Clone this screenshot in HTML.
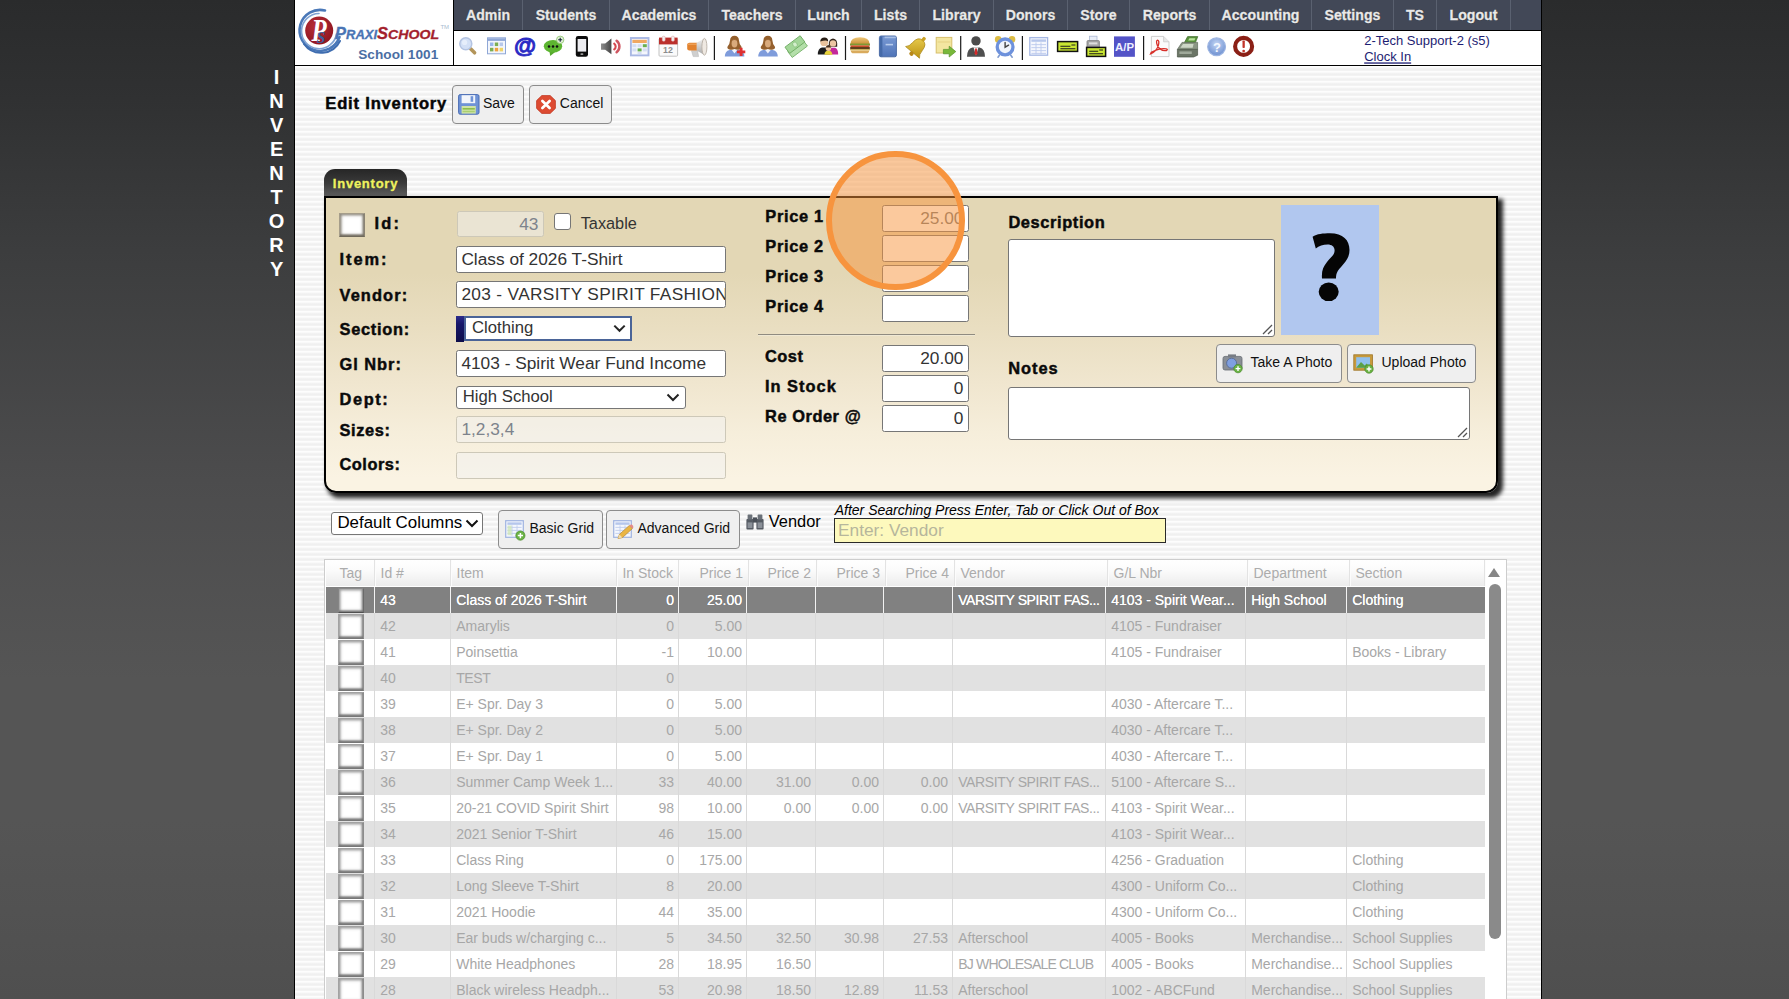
<!DOCTYPE html>
<html>
<head>
<meta charset="utf-8">
<title>Edit Inventory</title>
<style>
*{box-sizing:border-box;}
html,body{margin:0;padding:0;}
body{width:1789px;height:999px;overflow:hidden;position:relative;font-family:"Liberation Sans",sans-serif;
 background:linear-gradient(to bottom,#2a2b2c 0px,#303132 100px,#3c3d3e 250px,#4c4c4d 480px,#555555 680px,#555555 820px,#4f4f4f 999px);}
.abs{position:absolute;}
#wrap{position:absolute;left:294px;top:0;width:1248px;height:999px;border-left:1px solid #000;border-right:1px solid #000;
 background:repeating-linear-gradient(to bottom,#fdfdfd 0px,#fdfdfd 1px,#f5f5f5 2px,#f0f0f0 3px,#f0f0f0 4px,#f6f6f6 5px);background-position:0 66px;}
#hdr{position:absolute;left:0;top:0;width:1246px;height:66px;background:#fff;border-bottom:1px solid #000;}
#logo{position:absolute;left:0;top:0;width:159px;height:65px;border-right:1px solid #000;background:#fff;}
#nav{position:absolute;left:159px;top:0;width:1087px;height:31px;background:#424857;border-bottom:1px solid #000;display:flex;}
#nav div{height:30px;border-right:1px solid #5a6170;color:#e9e9e9;font-weight:bold;font-size:14.1px;line-height:30px;text-align:center;text-shadow:0 0 1px #000;letter-spacing:0.05px;-webkit-text-stroke:0.35px #e9e9e9;}
#vert{position:absolute;left:264.6px;top:65px;width:24px;color:#fff;font-weight:bold;font-size:20px;line-height:24px;text-align:center;}
.btn{position:absolute;height:39px;border:1px solid #8c8c8c;border-radius:4px;background:#efefef;font-size:14px;color:#111;line-height:35px;white-space:nowrap;}
.btn span{position:absolute;top:0;}
.lbl{position:absolute;font-weight:bold;font-size:16.4px;color:#0a0a0a;letter-spacing:0.72px;white-space:nowrap;line-height:20px;margin-top:0.5px;-webkit-text-stroke:0.45px #0a0a0a;}
.inp{position:absolute;height:27.2px;border:1px solid #767676;border-radius:2.5px;background:#fff;font-size:17.3px;color:#333;line-height:25.4px;padding:0 4.6px 0 4.4px;white-space:nowrap;overflow:hidden;}
.inp.dis{background:rgba(241,241,241,0.5);border-color:#cdc8b8;color:#7d838c;}
.inp.r{text-align:right;}
#panel{position:absolute;left:29px;top:196px;width:1174px;height:296.8px;border:2px solid #000;border-radius:0 0 12px 12px;
 background:linear-gradient(to bottom,#e3d7b5 0px,#e3d7b5 75px,#e9dec1 130px,#f0e6cf 185px,#f6eedb 235px,#faf3e3 280px,#faf3e3 100%);box-shadow:4px 4px 4.5px 0.3px rgba(0,0,0,0.86);}
#tab{position:absolute;left:29px;top:169px;width:83px;height:28px;border-radius:11px 11px 0 0;background:linear-gradient(to bottom,#262626,#3a3a3a 50%,#5e5e5e);
 color:#eef25e;font-weight:bold;font-size:13px;letter-spacing:0.75px;line-height:29px;text-align:center;-webkit-text-stroke:0.3px #eef25e;}

#grid{position:absolute;left:29px;top:559px;width:1183px;height:460px;background:#fff;border:1px solid #cdcdcd;font-size:14px;}
.gh{position:absolute;left:1px;top:0;height:26px;width:1160px;display:flex;background:linear-gradient(to bottom,#ffffff 0%,#fbfbfb 40%,#ececec 100%);color:#acacac;line-height:27px;}
.gh div{height:26px;border-right:1px solid #e3e3e3;box-shadow:1px 0 0 #fcfcfc;padding:0 0 0 5.5px;white-space:nowrap;overflow:hidden;}
.gh div.r{text-align:right;padding:0 5px 0 0;}
.gh div.t{padding-left:13.5px;}
.gr{position:absolute;left:1px;height:26px;width:1159px;display:flex;color:#a7a7a7;line-height:26px;}
.gr div{height:26px;border-right:1px solid #d9d9d9;padding:0 0 0 5.2px;white-space:nowrap;overflow:hidden;position:relative;}
.gr div:last-child{border-right:0;}
.gr div.r{text-align:right;padding:0 4px 0 0;}
.gr div.u{letter-spacing:-0.38px;}
.gr.ev{background:#e1e1e1;}
.gr.od{background:#fff;}
.gr.sel{background:#818181;color:#fff;}
.gr.sel div{border-right-color:#f2f2f2;text-shadow:0 0 0.3px #fff;}
.gr i{position:absolute;left:12px;top:1px;width:26px;height:25px;background:#fff;border:1px solid #a2a2a2;border-bottom-color:#777;border-right-color:#8c8c8c;box-shadow:inset 0 0 2.5px 1.6px rgba(70,70,70,0.52),inset -0.5px -1.5px 1.5px rgba(40,40,40,0.42);}
.gr.sel i{border-color:#8a8a8a #6a6a6a #505050 #858585;}
.sbu{position:absolute;left:1163px;top:8px;width:0;height:0;border-left:6.5px solid transparent;border-right:6.5px solid transparent;border-bottom:9px solid #868686;}
.sbt{position:absolute;left:1163.5px;top:24px;width:12px;height:355px;border-radius:6px;background:#8a8a8a;}
</style>
</head>
<body>
<div id="vert">I<br>N<br>V<br>E<br>N<br>T<br>O<br>R<br>Y</div>
<div id="wrap">
 <div id="hdr">
  <div id="logo"><svg class="abs" style="left:0;top:0" width="158" height="65" viewBox="0 0 158 65">
 <defs><radialGradient id="lgR" cx="40%" cy="35%" r="70%"><stop offset="0" stop-color="#b8303a"/><stop offset="1" stop-color="#8e141e"/></radialGradient></defs>
 <path d="M30 10.5 A20.5 20.5 0 1 0 44.5 37" fill="none" stroke="#4a78b8" stroke-width="2.6" stroke-linecap="round"/>
 <path d="M24 13.5 A17.6 17.6 0 1 0 41.5 34" fill="none" stroke="#7fa3d4" stroke-width="1.6" stroke-linecap="round"/>
 <path d="M9 44 A21 21 0 0 0 45 41" fill="none" stroke="#3f6db0" stroke-width="2" stroke-linecap="round"/>
 <circle cx="24.2" cy="30.6" r="14" fill="url(#lgR)"/>
 <text transform="translate(16.5 40.6) scale(0.8 1)" font-family="Liberation Serif" font-style="italic" font-weight="bold" font-size="31" fill="#fff">P</text>
 <text x="21.5" y="43" font-family="Liberation Serif" font-style="italic" font-weight="bold" font-size="16" fill="#3d5e9e">S</text>
 <text y="38.6" font-family="Liberation Sans" font-style="italic" font-weight="bold" fill="#4a74b4" stroke="#4a74b4" stroke-width="0.3"><tspan x="40" font-size="16.5">P</tspan><tspan font-size="12" textLength="31" lengthAdjust="spacingAndGlyphs">RAXI</tspan><tspan fill="#a31f2d" stroke="#a31f2d" font-size="16.5">S</tspan><tspan fill="#a31f2d" stroke="#a31f2d" font-size="12" textLength="51" lengthAdjust="spacingAndGlyphs">CHOOL</tspan></text>
 <text x="145.4" y="29" font-family="Liberation Sans" font-size="6" fill="#a9bcd0">TM</text>
 <text x="63.2" y="59.2" font-family="Liberation Sans" font-weight="bold" font-size="13.6" fill="#4a6ea3" textLength="80" lengthAdjust="spacing">School 1001</text>
</svg>
</div>
  <div id="nav"><div style="width:69px">Admin</div><div style="width:87px">Students</div><div style="width:99px">Academics</div><div style="width:87px">Teachers</div><div style="width:66px">Lunch</div><div style="width:58px">Lists</div><div style="width:74px">Library</div><div style="width:74px">Donors</div><div style="width:62px">Store</div><div style="width:80px">Reports</div><div style="width:102px">Accounting</div><div style="width:82px">Settings</div><div style="width:43px">TS</div><div style="width:74px">Logout</div></div>
  <svg class="abs" style="left:159px;top:31px" width="1087" height="34" viewBox="454 31 1087 34" font-family="Liberation Sans">
 <defs>
  <linearGradient id="gGray" x1="0" y1="0" x2="1" y2="0"><stop offset="0" stop-color="#8e8e8e"/><stop offset="1" stop-color="#454545"/></linearGradient>
  <linearGradient id="gBlue" x1="0" y1="0" x2="0" y2="1"><stop offset="0" stop-color="#7a9ad4"/><stop offset="1" stop-color="#4f74b8"/></linearGradient>
  <radialGradient id="gHelp" cx="50%" cy="35%" r="65%"><stop offset="0" stop-color="#c4d6f4"/><stop offset="1" stop-color="#6d8fd0"/></radialGradient>
  <linearGradient id="gBell" x1="0" y1="0" x2="1" y2="1"><stop offset="0" stop-color="#efd457"/><stop offset="1" stop-color="#bb9212"/></linearGradient>
  <linearGradient id="gMeg" x1="0" y1="0" x2="0" y2="1"><stop offset="0" stop-color="#f1f1f1"/><stop offset="1" stop-color="#a9a9a9"/></linearGradient>
  <linearGradient id="gBun" x1="0" y1="0" x2="0" y2="1"><stop offset="0" stop-color="#f0c878"/><stop offset="1" stop-color="#c8923a"/></linearGradient>
 </defs>
 <!-- separators -->
 <g stroke="#1a1a1a" stroke-width="1.2"><path d="M714.4 36V60M845.5 36V60M960.7 36V60M1022.4 36V60M1143.6 36V60"/></g>
 <!-- 1 magnifier -->
 <path d="M470.6 48.8L474.6 52.8" stroke="#b3955a" stroke-width="3.6" stroke-linecap="round"/>
 <circle cx="465.8" cy="43.7" r="6" fill="#d3e0f6" stroke="#b4c4e2" stroke-width="1.5"/><circle cx="464.6" cy="42.4" r="2.6" fill="#e6eefb"/>
 <!-- 2 grid app -->
 <rect x="487.5" y="37.8" width="18" height="16" fill="#f3f6fc" stroke="#8fa7d6"/>
 <rect x="488" y="38.3" width="17" height="2.6" fill="#8fa7d6"/>
 <rect x="490" y="42.5" width="3.4" height="3.6" fill="#9ab6ea"/><rect x="494.8" y="42.5" width="3.4" height="3.6" fill="#7cae52"/><rect x="499.6" y="42.5" width="3.4" height="3.6" fill="#b8c8ea"/>
 <rect x="490" y="47.8" width="3.4" height="3.6" fill="#7cae52"/><rect x="494.8" y="47.8" width="3.4" height="3.6" fill="#eea23c"/><rect x="499.6" y="47.8" width="3.4" height="3.6" fill="#efd468"/>
 <!-- 3 at -->
 <text x="514" y="53.2" font-size="22.6" font-weight="bold" fill="#2a2ac4" stroke="#2a2ac4" stroke-width="0.9">@</text>
 <!-- 4 chat -->
 <path d="M549.5 51.6L550.2 56L555.5 51.8Z" fill="#55a82c"/>
 <ellipse cx="553" cy="46.2" rx="9.2" ry="6.3" fill="#5db531"/>
 <circle cx="549" cy="46.6" r="1.25" fill="#111"/><circle cx="553" cy="46.6" r="1.25" fill="#111"/><circle cx="557" cy="46.6" r="1.25" fill="#111"/>
 <circle cx="560.2" cy="39.8" r="3.7" fill="#e4f2da" stroke="#93c877" stroke-width="0.9"/>
 <path d="M558.2 39.8H562.2M560.2 37.8V41.8" stroke="#123" stroke-width="1.1"/>
 <!-- 5 phone -->
 <rect x="575.8" y="36" width="12.2" height="20.8" rx="2.2" fill="#0c0c0c"/>
 <rect x="577.6" y="39" width="8.6" height="12.6" fill="#ececf0"/>
 <rect x="580.4" y="53.2" width="3" height="1.8" rx="0.8" fill="#9a9a9a"/>
 <!-- 6 speaker -->
 <path d="M601 43.6H605.2L611.4 38.6V54.2L605.2 49.8H601Z" fill="url(#gGray)"/>
 <path d="M614.2 43.6A3.6 3.6 0 0 1 614.2 49.4" fill="none" stroke="#d6484e" stroke-width="2.1" stroke-linecap="round"/>
 <path d="M616.6 40.8A7.2 7.2 0 0 1 616.6 52.2" fill="none" stroke="#cf5560" stroke-width="2.5" stroke-linecap="round"/>
 <!-- 7 calendar grid -->
 <rect x="630.9" y="38" width="17.6" height="17.4" fill="#f4f6fc" stroke="#a9b8e4" stroke-width="1.9"/>
 <rect x="632.4" y="39.8" width="14.4" height="3.2" fill="#f0a862"/>
 <g fill="#d5def2"><rect x="632.4" y="44.2" width="4" height="3"/><rect x="637.6" y="44.2" width="4" height="3"/><rect x="632.4" y="48.4" width="4" height="3"/><rect x="642.8" y="48.4" width="4" height="3"/><rect x="637.6" y="52" width="4" height="2"/></g>
 <g fill="#6ab050"><rect x="642.8" y="44.2" width="4" height="3"/><rect x="637.6" y="48.4" width="4" height="3"/></g>
 <!-- 8 calendar date -->
 <rect x="659" y="38.6" width="18.6" height="17.6" rx="1" fill="#fafafa" stroke="#c2c2c2"/>
 <rect x="659" y="37.6" width="18.6" height="6.8" fill="#bb302c"/>
 <rect x="662.2" y="36.2" width="3" height="5" rx="1.2" fill="#f1f1f1" stroke="#d99" stroke-width="0.5"/><rect x="671.4" y="36.2" width="3" height="5" rx="1.2" fill="#f1f1f1" stroke="#d99" stroke-width="0.5"/>
 <text x="663" y="53.4" font-size="8.8" font-weight="bold" fill="#8d8d8d">12</text>
 <!-- 9 megaphone -->
 <path d="M691.4 50.6L693.2 56.6H698.6L697.6 50.6Z" fill="#cfcfcf" stroke="#b5b5b5" stroke-width="0.5"/>
 <path d="M687.2 44.6Q687.2 42.8 689.4 42.8H697V50.6H689.4Q687.2 50.6 687.2 48.8Z" fill="#e2822e"/>
 <path d="M688 44.2H696.6" stroke="#f0a860" stroke-width="1.2"/>
 <path d="M696.6 42.8L704.6 38.6V55L696.6 50.6Z" fill="url(#gMeg)"/>
 <ellipse cx="704.4" cy="46.8" rx="2.5" ry="8.4" fill="#efe9e2" stroke="#b9b0a6" stroke-width="0.9"/>
 <!-- 10 user add -->
 <g id="uW">
  <path d="M724.8 56.6Q724.8 51.2 729.6 50H739.4Q744.4 51.2 744.4 56.6Z" fill="#7f9cdb"/>
  <path d="M731.4 49.6L734.5 53.6L737.6 49.6Z" fill="#f2f4fb"/>
  <path d="M734.5 35.8Q730.4 35.8 730 40.4Q729.8 44 727.6 46.4Q726.6 48.6 729.4 49.4Q732 50 734.5 49Q737 50 739.6 49.4Q742.4 48.6 741.4 46.4Q739.2 44 739 40.4Q738.6 35.8 734.5 35.8Z" fill="#95602d"/>
  <ellipse cx="734.5" cy="43.4" rx="2.9" ry="4" fill="#d9aa7c"/>
  <path d="M731.4 41Q734.5 37.8 737.6 41Q736 39.8 734.5 39.9Q733 39.8 731.4 41Z" fill="#7a4a20"/>
 </g>
 <path d="M736.9 51.9H745.3M741.1 47.7V56.1" stroke="#df3030" stroke-width="2.9"/>
 <!-- 11 user -->
 <g transform="translate(33.4 0)">
  <path d="M724.8 56.6Q724.8 51.2 729.6 50H739.4Q744.4 51.2 744.4 56.6Z" fill="#7f9cdb"/>
  <path d="M731.4 49.6L734.5 53.6L737.6 49.6Z" fill="#f2f4fb"/>
  <path d="M734.5 35.8Q730.4 35.8 730 40.4Q729.8 44 727.6 46.4Q726.6 48.6 729.4 49.4Q732 50 734.5 49Q737 50 739.6 49.4Q742.4 48.6 741.4 46.4Q739.2 44 739 40.4Q738.6 35.8 734.5 35.8Z" fill="#95602d"/>
  <ellipse cx="734.5" cy="43.4" rx="2.9" ry="4" fill="#d9aa7c"/>
  <path d="M731.4 41Q734.5 37.8 737.6 41Q736 39.8 734.5 39.9Q733 39.8 731.4 41Z" fill="#7a4a20"/>
 </g>
 <!-- 12 money -->
 <g transform="rotate(-37 796 46.5)"><rect x="786.4" y="45.6" width="19" height="7.4" fill="#b4dfaa" stroke="#7fb873" stroke-width="0.9"/><rect x="786.8" y="40.4" width="19" height="7.8" fill="#a3d698" stroke="#72ae66" stroke-width="0.9"/><ellipse cx="796.4" cy="44.3" rx="2.2" ry="2.6" fill="#d3efcc" stroke="#7fb873" stroke-width="0.6"/></g>
 <!-- 13 family -->
 <path d="M817.8 54.6Q817.8 48.4 822 47.6H826.4Q830 48.6 830 54.6Z" fill="#1c1c1c"/>
 <circle cx="824.2" cy="42.2" r="3.9" fill="#e9c29c"/><path d="M820.2 41.6Q820.6 37.4 824.4 37.4Q828.2 37.6 828.2 41.4Q826 39.6 820.2 41.6Z" fill="#2a2018"/>
 <path d="M827.4 54.6Q827.6 48.6 831 47.8H835Q838.2 48.8 838.2 54.6Z" fill="#c4289a"/>
 <path d="M828.8 46.8Q828 39 833 38.6Q838 39 837.2 46.8Z" fill="#33261c"/><circle cx="833" cy="43.4" r="3.2" fill="#ecc6a2"/>
 <path d="M824.4 54.7Q824.6 50.8 828.4 50.6Q832.2 50.8 832.4 54.7Z" fill="#e6d23a"/>
 <circle cx="828.4" cy="48.2" r="2.7" fill="#efc9a4"/><path d="M825.7 47.6Q826.2 45 828.4 45Q830.8 45 831.1 47.6Z" fill="#4a3220"/>
 <!-- 14 burger -->
 <path d="M850.4 44Q850.4 37.2 860 37.2Q869.6 37.2 869.6 44Z" fill="url(#gBun)"/>
 <rect x="850" y="43.6" width="20" height="2" fill="#7d9a34"/><rect x="850.6" y="45.4" width="18.8" height="1.6" fill="#d4502e"/><rect x="850.2" y="46.9" width="19.6" height="2.7" fill="#5f3f1c"/><rect x="850.4" y="49.4" width="19.2" height="1" fill="#e7c84e"/>
 <path d="M850.8 50.4H869.2Q869.2 53.2 866.4 53.2H853.6Q850.8 53.2 850.8 50.4Z" fill="#d9aa5c"/>
 <!-- 15 book -->
 <rect x="879.4" y="36" width="17" height="20.8" rx="1.6" fill="url(#gBlue)" stroke="#42639e" stroke-width="0.9"/>
 <rect x="880" y="36.4" width="2.4" height="20" fill="#456aa8"/>
 <rect x="884.6" y="36.6" width="11.2" height="1.6" fill="#a9c0e6"/><rect x="885.6" y="43.8" width="7.4" height="1.6" fill="#b9cdee"/>
 <!-- 16 bell -->
 <g transform="rotate(40 917.4 46.6) translate(917.4 46.6) scale(1.16) translate(-917 -46.5)"><path d="M909.2 53Q911.6 51.2 911.6 46.4Q911.8 39.4 917 39.4Q922.2 39.4 922.4 46.4Q922.4 51.2 924.8 53Z" fill="url(#gBell)" stroke="#a88410" stroke-width="0.6"/><rect x="915.6" y="36.2" width="2.8" height="4" rx="1" fill="#c9a024"/><circle cx="917" cy="54.4" r="1.9" fill="#b8881a"/></g>
 <!-- 17 note arrow -->
 <rect x="936.2" y="37.4" width="15.6" height="15.6" fill="#f3e6a0" stroke="#d7bf6c"/>
 <path d="M937.6 42H950.4" stroke="#e5d182" stroke-width="1"/>
 <path d="M943.4 49.4H949.2V46.2L955.8 51.6L949.2 57V53.8H943.4Z" fill="#78b83a" stroke="#56922a" stroke-width="0.7"/>
 <!-- 18 businessman -->
 <circle cx="976" cy="40.9" r="4.7" fill="#4c4c4c"/>
 <path d="M967 56.8Q967 48.8 972.4 47.4H979.6Q985 48.8 985 56.8Z" fill="#4f4f4f"/>
 <path d="M973.6 47.6L976 55.4L978.4 47.6Z" fill="#f3f3f3"/><path d="M975.2 48.4H976.8L977.5 53.6L976 55.4L974.5 53.6Z" fill="#d42a2a"/>
 <!-- 19 alarm clock -->
 <circle cx="998.2" cy="39.4" r="3.3" fill="#dcbc44"/><circle cx="1012" cy="39.4" r="3.3" fill="#dcbc44"/>
 <path d="M999.6 55L998 57.2M1010.6 55L1012.2 57.2" stroke="#7f9bd0" stroke-width="1.6" stroke-linecap="round"/>
 <circle cx="1005.1" cy="46.9" r="7.9" fill="#f1f5fc" stroke="#6d91dc" stroke-width="3.3"/>
 <path d="M1005.1 42.4V47.2L1008.6 45.2" fill="none" stroke="#444" stroke-width="1.4" stroke-linecap="round"/>
 <!-- 20 table -->
 <rect x="1029.8" y="37.6" width="17.8" height="17.6" fill="#f5f7fd" stroke="#a6b8e4" stroke-width="1.3"/>
 <rect x="1031.4" y="39.4" width="14.6" height="2.4" fill="#b7c7ec"/>
 <path d="M1031.4 44.6H1046M1031.4 47.6H1046M1031.4 50.6H1046M1031.4 53.4H1046M1036 42.4V54.4M1041 42.4V54.4" stroke="#bccaec" stroke-width="0.9"/>
 <!-- 21 check card -->
 <rect x="1057.6" y="41.6" width="20" height="9.8" fill="#c9e632" stroke="#111" stroke-width="1.5"/>
 <path d="M1060.4 46.2H1070.4M1071.4 45H1075.4M1060.4 48.8H1075.4" stroke="#1c1c1c" stroke-width="1.1"/>
 <!-- 22 printer+check -->
 <rect x="1089.6" y="36.2" width="7.4" height="5" fill="#e9eef8" stroke="#aab7d2" stroke-width="0.8"/>
 <rect x="1087" y="40.6" width="12.4" height="7.6" rx="1" fill="#a6a6a6" stroke="#7d7d7d" stroke-width="0.8"/>
 <rect x="1089" y="42.4" width="8.4" height="2" fill="#dedede"/>
 <rect x="1086.6" y="47.4" width="19" height="9" fill="#c9e632" stroke="#111" stroke-width="1.5"/>
 <path d="M1089.2 51.2H1098.2M1099.2 50H1103M1089.2 53.8H1103" stroke="#1c1c1c" stroke-width="1.1"/>
 <!-- 23 A/P -->
 <rect x="1114" y="36.4" width="20.9" height="20.4" fill="#5353c7"/>
 <text x="1115" y="50.6" font-size="10.6" font-weight="bold" fill="#eef0ff" textLength="19" lengthAdjust="spacingAndGlyphs">A/P</text>
 <!-- 24 pdf -->
 <path d="M1151.4 36.4H1163.6L1169 41.8V56.6H1151.4Z" fill="#fbfbfb" stroke="#c9c9c9" stroke-width="0.9"/>
 <path d="M1163.6 36.4V41.8H1169" fill="#e8e8e8" stroke="#c9c9c9" stroke-width="0.8"/>
 <path d="M1150.6 53.8Q1156.4 51.6 1158.4 45.4Q1159.6 40.6 1157.6 40.2Q1155.6 40.8 1157.4 45.6Q1160 51.4 1166.4 50.6Q1168.4 49.6 1166.2 48.8Q1159.4 47.8 1151.2 52.4Z" fill="none" stroke="#d8302a" stroke-width="1.3"/>
 <!-- 25 cash register -->
 <path d="M1184.4 42.6L1187.6 36.6H1197.8L1195.4 42.6Z" fill="#58903c" stroke="#3f6d2b" stroke-width="0.7"/>
 <path d="M1188.2 40.4L1189.4 38.2H1195.4L1194.4 40.4Z" fill="#b9e49c"/>
 <path d="M1177.4 49.4L1182 42.4H1197.6L1197.6 49.4Z" fill="#8b9684" stroke="#5f6a5a" stroke-width="0.7"/>
 <path d="M1180.4 47.8L1183 44H1193.6L1192.6 47.8Z" fill="#cdd6c6"/>
 <path d="M1177.4 49.4H1197.6V55.2L1193.6 57H1177.4Z" fill="#6b7566" stroke="#4c5648" stroke-width="0.7"/>
 <rect x="1179.4" y="51.4" width="12.4" height="2.6" fill="#9fa99a"/>
 <!-- 26 help -->
 <circle cx="1216.6" cy="46.8" r="8.9" fill="url(#gHelp)" stroke="#9db5e2" stroke-width="1.2"/>
 <text x="1212.9" y="51.6" font-size="13" font-weight="bold" fill="#f5f8ff">?</text>
 <!-- 27 alert -->
 <circle cx="1243.6" cy="46.4" r="8.5" fill="#fff" stroke="#8b2016" stroke-width="4.1"/>
 <rect x="1242.5" y="40.4" width="2.3" height="7.6" rx="0.8" fill="#c2342a"/><circle cx="1243.65" cy="51" r="1.35" fill="#c2342a"/>
 <!-- user text -->
 <text x="1364.2" y="45.4" font-size="13" fill="#1d1d72">2-Tech Support-2 (s5)</text>
 <text x="1364.2" y="61.4" font-size="13" fill="#1d1d72" text-decoration="underline">Clock In</text>
</svg>

 </div>
 <div class="abs" style="left:30.3px;top:93.8px;font-weight:bold;font-size:16.6px;letter-spacing:0.8px;color:#050505;line-height:20px;white-space:nowrap;-webkit-text-stroke:0.45px #050505">Edit Inventory</div>
 <div class="btn" style="left:157px;top:85px;width:72px">
  <svg class="abs" style="left:5px;top:8px" width="22" height="21" viewBox="0 0 22 21"><rect x="0.6" y="0.6" width="20.4" height="19.6" rx="1.6" fill="#6f93d6" stroke="#4a6db4" stroke-width="1"/><rect x="3.6" y="1.2" width="13.6" height="8" fill="#f2f5fb"/><rect x="12.6" y="2.2" width="2.6" height="5.6" fill="#6f93d6"/><rect x="3.6" y="12" width="14.2" height="7.6" fill="#cfe3a4"/><rect x="4.6" y="14" width="12.2" height="1.6" fill="#8cbf4a"/><rect x="4.6" y="16.8" width="12.2" height="1.4" fill="#a9d070"/></svg>
  <span style="left:30px;top:9px;line-height:16px">Save</span></div>
 <div class="btn" style="left:234px;top:85px;width:83px">
  <svg class="abs" style="left:6px;top:9px" width="20" height="19" viewBox="0 0 20 19"><path d="M5.8 0.6H14.2L19.4 5.6V13.4L14.2 18.4H5.8L0.6 13.4V5.6Z" fill="#dd4b32" stroke="#c23a24" stroke-width="0.8"/><path d="M6.4 6L13.6 13M13.6 6L6.4 13" stroke="#fff" stroke-width="2.7" stroke-linecap="round"/></svg>
  <span style="left:29.8px;top:9px;line-height:16px">Cancel</span></div>

 <div id="tab">Inventory</div>
 <div id="panel">
 <div class="abs" style="left:13.2px;top:14.8px;width:25.8px;height:24px;background:#fff;border:1px solid #a59d8a;border-right-color:#8a8373;border-bottom-color:#6f695b;box-shadow:inset 0 0 2.5px 1.6px rgba(80,72,55,0.62),inset -0.5px -1.5px 1.5px rgba(60,52,40,0.45)"></div>
  <div class="lbl" style="left:48.5px;top:14.4px;letter-spacing:2.2px">Id:</div>
  <div class="inp dis r" style="left:130.6px;top:12.8px;width:87.4px;height:26.5px;line-height:25.4px">43</div>
  <div class="abs" style="left:227.8px;top:14.8px;width:16.8px;height:16.8px;background:#fff;border:1px solid #767676;border-radius:3px"></div>
  <div class="abs" style="left:254.7px;top:15.4px;font-size:16.3px;color:#333;line-height:20px">Taxable</div>
  <div class="lbl" style="left:13.6px;top:50.6px;letter-spacing:1.9px">Item:</div>
  <div class="inp" style="left:130px;top:48px;width:270px">Class of 2026 T-Shirt</div>
  <div class="lbl" style="left:13.5px;top:86.6px;letter-spacing:1.1px">Vendor:</div>
  <div class="inp" style="left:130px;top:83px;width:270px;letter-spacing:0.33px">203 - VARSITY SPIRIT FASHIONS</div>
  <div class="lbl" style="left:13.5px;top:120.9px">Section:</div>
  <div class="abs" style="left:130px;top:118px;width:8.4px;height:25.6px;background:linear-gradient(to bottom,#2c2c8c 0%,#17176a 30%,#0e0e4a 100%)"></div>
  <div class="abs" style="left:138px;top:118px;width:168px;height:25px;background:#fff;border:2px solid #4a6498;font-size:16.7px;color:#333;line-height:20.5px;padding-left:6px;white-space:nowrap">Clothing
   <svg class="abs" style="right:4.4px;top:6.2px" width="13" height="9" viewBox="0 0 13 9"><path d="M1.3 1.6L6.5 6.8L11.7 1.6" fill="none" stroke="#262626" stroke-width="2"/></svg></div>
  <div class="lbl" style="left:13.5px;top:155.6px;letter-spacing:0.97px">Gl Nbr:</div>
  <div class="inp" style="left:130px;top:152px;width:270px">4103 - Spirit Wear Fund Income</div>
  <div class="lbl" style="left:13.5px;top:190.0px;letter-spacing:1.6px">Dept:</div>
  <div class="abs" style="left:130px;top:188px;width:230px;height:22.5px;background:#fff;border:1px solid #767676;border-radius:3px;font-size:16.7px;color:#333;line-height:20.5px;padding-left:5.8px">High School
   <svg class="abs" style="right:5px;top:6px" width="14" height="9" viewBox="0 0 14 9"><path d="M1.5 1.5L7 7L12.5 1.5" fill="none" stroke="#222" stroke-width="2"/></svg></div>
  <div class="lbl" style="left:13.5px;top:221.0px;letter-spacing:0.6px">Sizes:</div>
  <div class="inp dis" style="left:130px;top:218px;width:270px">1,2,3,4</div>
  <div class="lbl" style="left:13.5px;top:255.9px;letter-spacing:0.5px">Colors:</div>
  <div class="inp dis" style="left:130px;top:254px;width:270px"></div>

  <div class="lbl" style="left:439.3px;top:7.3px;letter-spacing:0.67px">Price 1</div>
  <div class="lbl" style="left:439.3px;top:37.3px;letter-spacing:0.67px">Price 2</div>
  <div class="lbl" style="left:439.3px;top:67.3px;letter-spacing:0.67px">Price 3</div>
  <div class="lbl" style="left:439.3px;top:97.3px;letter-spacing:0.67px">Price 4</div>
  <div class="inp r" style="left:556px;top:7px;width:87px;color:#777">25.00</div>
  <div class="inp r" style="left:556px;top:37px;width:87px"></div>
  <div class="inp r" style="left:556px;top:67px;width:87px"></div>
  <div class="inp r" style="left:556px;top:97px;width:87px"></div>
  <div class="abs" style="left:432px;top:136px;width:217px;height:2px;border-top:1px solid #8f8b80;border-bottom:1px solid #efe8d4"></div>
  <div class="lbl" style="left:439px;top:147.9px;letter-spacing:0.5px">Cost</div>
  <div class="lbl" style="left:439px;top:177.8px;letter-spacing:1px">In Stock</div>
  <div class="lbl" style="left:439px;top:207.5px;letter-spacing:0.55px">Re Order @</div>
  <div class="inp r" style="left:556px;top:147px;width:87px">20.00</div>
  <div class="inp r" style="left:556px;top:177px;width:87px">0</div>
  <div class="inp r" style="left:556px;top:207px;width:87px">0</div>

  <div class="lbl" style="left:682.4px;top:13.5px;letter-spacing:0.62px">Description</div>
  <div class="abs" style="left:682px;top:41px;width:267px;height:98px;background:#fff;border:1px solid #767676;border-radius:3px">
   <svg class="abs" style="right:1px;bottom:1px" width="12" height="12" viewBox="0 0 12 12"><path d="M2 11L11 2M7 11L11 7" stroke="#555" stroke-width="1.3"/></svg></div>
  <div class="abs" style="left:955px;top:7px;width:98px;height:130px;background:#b1c7ef;overflow:hidden">
   <svg width="98" height="130" viewBox="0 0 98 130"><path d="M31.6 31.7 C36 28.8 42 28.2 49 28.2 C62 28.2 68.5 35 68.5 45 C68.5 55 61 60 56.8 66 C55.2 68.5 55 71 55 73.6 L41 73.6 C40.4 66 42 62 46 57 C50 52 53.6 50 53.6 45.6 C53.6 41.6 50.6 39.6 46.6 39.6 C42 39.6 38 41.2 34.8 43.4 Z" fill="#050505"/><ellipse cx="47.7" cy="86.8" rx="10" ry="9.3" fill="#050505"/></svg></div>
  <div class="lbl" style="left:682.2px;top:159.4px;letter-spacing:1px">Notes</div>
  <div class="btn" style="left:890px;top:146px;width:126px">
   <svg class="abs" style="left:5px;top:8px" width="22" height="21" viewBox="0 0 22 21"><rect x="1" y="3.4" width="19" height="13.6" rx="2" fill="#8a8f96" stroke="#666b72" stroke-width="0.8"/><rect x="6" y="1.4" width="8" height="3" fill="#777c84"/><circle cx="9.6" cy="10.2" r="5" fill="#7f9fe0" stroke="#5a6f9a" stroke-width="1"/><circle cx="16" cy="15.6" r="4.2" fill="#6ab344" stroke="#4a8a2c" stroke-width="0.7"/><path d="M13.6 15.6H18.4M16 13.2V18" stroke="#fff" stroke-width="1.4"/></svg>
   <span style="left:33.5px;top:9px;line-height:16px">Take A Photo</span></div>
  <div class="btn" style="left:1021px;top:146px;width:129px">
   <svg class="abs" style="left:5px;top:9px" width="22" height="20" viewBox="0 0 22 20"><rect x="0.8" y="0.8" width="18.6" height="15.4" fill="#c79a3c" stroke="#9e7424" stroke-width="0.8"/><rect x="3.2" y="3.2" width="13.8" height="10.6" fill="#8fc0ee"/><path d="M3.2 13.8L8 8L11.6 11.6L13.8 9.6L17 13.8Z" fill="#5aa048"/><circle cx="16" cy="15" r="4.2" fill="#6ab344" stroke="#4a8a2c" stroke-width="0.7"/><path d="M13.6 15H18.4M16 12.6V17.4" stroke="#fff" stroke-width="1.4"/></svg>
   <span style="left:33.5px;top:9px;line-height:16px">Upload Photo</span></div>
  <div class="abs" style="left:682px;top:189px;width:462px;height:53px;background:#fff;border:1px solid #767676;border-radius:3px">
   <svg class="abs" style="right:1px;bottom:1px" width="12" height="12" viewBox="0 0 12 12"><path d="M2 11L11 2M7 11L11 7" stroke="#555" stroke-width="1.3"/></svg></div>

 </div>
 <div class="abs" style="left:531.2px;top:151px;width:138.6px;height:138.6px;border-radius:50%;border:6px solid #f7943e;background:rgba(247,147,60,0.5)"></div>

 <div class="abs" style="left:36px;top:512px;width:152px;height:22.5px;background:#fff;border:1px solid #767676;border-radius:3px;font-size:16.9px;color:#000;line-height:20px;padding-left:5.4px;white-space:nowrap">Default Columns
  <svg class="abs" style="right:3px;top:6.4px" width="14" height="9" viewBox="0 0 14 9"><path d="M1.5 1.5L7 7L12.5 1.5" fill="none" stroke="#111" stroke-width="2"/></svg></div>
 <div class="btn" style="left:203px;top:510px;width:105px">
  <svg class="abs" style="left:6px;top:9px" width="22" height="21" viewBox="0 0 22 21"><rect x="0.7" y="0.7" width="17.6" height="16.6" fill="#f4f7fd" stroke="#9fb3e0" stroke-width="1.2"/><rect x="2.4" y="2.4" width="14.2" height="2.4" fill="#b5c6ec"/><path d="M2.4 7.4H16.6M2.4 10.4H16.6M2.4 13.4H16.6M7 5.4V15.6M12 5.4V15.6" stroke="#c0cdec" stroke-width="0.9"/><rect x="2.6" y="5.6" width="4" height="9.6" fill="#cfe6b8" opacity="0.8"/><circle cx="15.4" cy="15.6" r="4.6" fill="#6ab344" stroke="#4a8a2c" stroke-width="0.7"/><path d="M12.8 15.6H18M15.4 13V18.2" stroke="#fff" stroke-width="1.5"/></svg>
  <span style="left:30.5px;top:9px;line-height:16px">Basic Grid</span></div>
 <div class="btn" style="left:311px;top:510px;width:134px">
  <svg class="abs" style="left:6px;top:9px" width="22" height="21" viewBox="0 0 22 21"><rect x="0.7" y="0.7" width="17.6" height="16.6" fill="#f4f7fd" stroke="#9fb3e0" stroke-width="1.2"/><rect x="2.4" y="2.4" width="14.2" height="2.4" fill="#b5c6ec"/><path d="M2.4 7.4H16.6M2.4 10.4H16.6M2.4 13.4H16.6M7 5.4V15.6M12 5.4V15.6" stroke="#c0cdec" stroke-width="0.9"/><path d="M5 18.6L6.4 14.4L16.4 5.4L19.4 8.6L9.4 17.6Z" fill="#eab544" stroke="#b8862a" stroke-width="0.7"/><path d="M5 18.6L6.4 14.4L9.4 17.6Z" fill="#f1dcae"/><path d="M16.4 5.4L19.4 8.6L20.4 7.4Q20.8 5.4 18.4 4.2Z" fill="#e58a8a"/></svg>
  <span style="left:30.5px;top:9px;line-height:16px">Advanced Grid</span></div>
 <svg class="abs" style="left:451px;top:514.4px" width="18" height="16" viewBox="0 0 18 16"><rect x="0.4" y="5" width="7.2" height="10.6" rx="1" fill="#555b63"/><rect x="10.4" y="5" width="7.2" height="10.6" rx="1" fill="#555b63"/><rect x="1.6" y="0.6" width="4.8" height="5" rx="0.8" fill="#6a7078"/><rect x="11.6" y="0.6" width="4.8" height="5" rx="0.8" fill="#6a7078"/><rect x="7" y="3.4" width="4" height="5.2" fill="#4a5058"/><rect x="1.6" y="8.4" width="4.8" height="5.6" fill="#8a9098"/><rect x="11.6" y="8.4" width="4.8" height="5.6" fill="#8a9098"/></svg>
 <div class="abs" style="left:473.8px;top:510.8px;font-size:16.4px;color:#000;line-height:20px">Vendor</div>
 <div class="abs" style="left:539.7px;top:502px;font-size:14px;font-style:italic;color:#000;line-height:16px;white-space:nowrap">After Searching Press Enter, Tab or Click Out of Box</div>
 <div class="abs" style="left:539px;top:518px;width:332px;height:25px;background:#fdf9bd;border:1px solid #2a2a2a;font-size:17.3px;color:#b6b69c;line-height:22.5px;padding-left:3px">Enter: Vendor</div>

 <div id="grid">
<div class="gh"><div style="width:49px" class=" t">Tag</div><div style="width:76px" class="">Id #</div><div style="width:166px" class="">Item</div><div style="width:62px" class="r">In Stock</div><div style="width:70px" class="r">Price 1</div><div style="width:68px" class="r">Price 2</div><div style="width:69px" class="r">Price 3</div><div style="width:69px" class="r">Price 4</div><div style="width:153px" class="">Vendor</div><div style="width:140px" class="">G/L Nbr</div><div style="width:102px" class="">Department</div><div style="width:135px" class="">Section</div></div>
<div class="gr sel" style="top:27px"><div style="width:49px"><i></i></div><div style="width:76px">43</div><div style="width:166px">Class of 2026 T-Shirt</div><div style="width:62px" class="r">0</div><div style="width:68px" class="r">25.00</div><div style="width:69px" class="r"></div><div style="width:68px" class="r"></div><div style="width:69px" class="r"></div><div style="width:153px" class="u">VARSITY SPIRIT FAS...</div><div style="width:140px">4103 - Spirit Wear...</div><div style="width:101px">High School</div><div style="width:138px">Clothing</div></div>
<div class="gr ev" style="top:53px"><div style="width:49px"><i></i></div><div style="width:76px">42</div><div style="width:166px">Amarylis</div><div style="width:62px" class="r">0</div><div style="width:68px" class="r">5.00</div><div style="width:69px" class="r"></div><div style="width:68px" class="r"></div><div style="width:69px" class="r"></div><div style="width:153px"></div><div style="width:140px">4105 - Fundraiser</div><div style="width:101px"></div><div style="width:138px"></div></div>
<div class="gr od" style="top:79px"><div style="width:49px"><i></i></div><div style="width:76px">41</div><div style="width:166px">Poinsettia</div><div style="width:62px" class="r">-1</div><div style="width:68px" class="r">10.00</div><div style="width:69px" class="r"></div><div style="width:68px" class="r"></div><div style="width:69px" class="r"></div><div style="width:153px"></div><div style="width:140px">4105 - Fundraiser</div><div style="width:101px"></div><div style="width:138px">Books - Library</div></div>
<div class="gr ev" style="top:105px"><div style="width:49px"><i></i></div><div style="width:76px">40</div><div style="width:166px" class="u">TEST</div><div style="width:62px" class="r">0</div><div style="width:68px" class="r"></div><div style="width:69px" class="r"></div><div style="width:68px" class="r"></div><div style="width:69px" class="r"></div><div style="width:153px"></div><div style="width:140px"></div><div style="width:101px"></div><div style="width:138px"></div></div>
<div class="gr od" style="top:131px"><div style="width:49px"><i></i></div><div style="width:76px">39</div><div style="width:166px">E+ Spr. Day 3</div><div style="width:62px" class="r">0</div><div style="width:68px" class="r">5.00</div><div style="width:69px" class="r"></div><div style="width:68px" class="r"></div><div style="width:69px" class="r"></div><div style="width:153px"></div><div style="width:140px">4030 - Aftercare T...</div><div style="width:101px"></div><div style="width:138px"></div></div>
<div class="gr ev" style="top:157px"><div style="width:49px"><i></i></div><div style="width:76px">38</div><div style="width:166px">E+ Spr. Day 2</div><div style="width:62px" class="r">0</div><div style="width:68px" class="r">5.00</div><div style="width:69px" class="r"></div><div style="width:68px" class="r"></div><div style="width:69px" class="r"></div><div style="width:153px"></div><div style="width:140px">4030 - Aftercare T...</div><div style="width:101px"></div><div style="width:138px"></div></div>
<div class="gr od" style="top:183px"><div style="width:49px"><i></i></div><div style="width:76px">37</div><div style="width:166px">E+ Spr. Day 1</div><div style="width:62px" class="r">0</div><div style="width:68px" class="r">5.00</div><div style="width:69px" class="r"></div><div style="width:68px" class="r"></div><div style="width:69px" class="r"></div><div style="width:153px"></div><div style="width:140px">4030 - Aftercare T...</div><div style="width:101px"></div><div style="width:138px"></div></div>
<div class="gr ev" style="top:209px"><div style="width:49px"><i></i></div><div style="width:76px">36</div><div style="width:166px">Summer Camp Week 1...</div><div style="width:62px" class="r">33</div><div style="width:68px" class="r">40.00</div><div style="width:69px" class="r">31.00</div><div style="width:68px" class="r">0.00</div><div style="width:69px" class="r">0.00</div><div style="width:153px" class="u">VARSITY SPIRIT FAS...</div><div style="width:140px">5100 - Aftercare S...</div><div style="width:101px"></div><div style="width:138px"></div></div>
<div class="gr od" style="top:235px"><div style="width:49px"><i></i></div><div style="width:76px">35</div><div style="width:166px">20-21 COVID Spirit Shirt</div><div style="width:62px" class="r">98</div><div style="width:68px" class="r">10.00</div><div style="width:69px" class="r">0.00</div><div style="width:68px" class="r">0.00</div><div style="width:69px" class="r">0.00</div><div style="width:153px" class="u">VARSITY SPIRIT FAS...</div><div style="width:140px">4103 - Spirit Wear...</div><div style="width:101px"></div><div style="width:138px"></div></div>
<div class="gr ev" style="top:261px"><div style="width:49px"><i></i></div><div style="width:76px">34</div><div style="width:166px">2021 Senior T-Shirt</div><div style="width:62px" class="r">46</div><div style="width:68px" class="r">15.00</div><div style="width:69px" class="r"></div><div style="width:68px" class="r"></div><div style="width:69px" class="r"></div><div style="width:153px"></div><div style="width:140px">4103 - Spirit Wear...</div><div style="width:101px"></div><div style="width:138px"></div></div>
<div class="gr od" style="top:287px"><div style="width:49px"><i></i></div><div style="width:76px">33</div><div style="width:166px">Class Ring</div><div style="width:62px" class="r">0</div><div style="width:68px" class="r">175.00</div><div style="width:69px" class="r"></div><div style="width:68px" class="r"></div><div style="width:69px" class="r"></div><div style="width:153px"></div><div style="width:140px">4256 - Graduation</div><div style="width:101px"></div><div style="width:138px">Clothing</div></div>
<div class="gr ev" style="top:313px"><div style="width:49px"><i></i></div><div style="width:76px">32</div><div style="width:166px">Long Sleeve T-Shirt</div><div style="width:62px" class="r">8</div><div style="width:68px" class="r">20.00</div><div style="width:69px" class="r"></div><div style="width:68px" class="r"></div><div style="width:69px" class="r"></div><div style="width:153px"></div><div style="width:140px">4300 - Uniform Co...</div><div style="width:101px"></div><div style="width:138px">Clothing</div></div>
<div class="gr od" style="top:339px"><div style="width:49px"><i></i></div><div style="width:76px">31</div><div style="width:166px">2021 Hoodie</div><div style="width:62px" class="r">44</div><div style="width:68px" class="r">35.00</div><div style="width:69px" class="r"></div><div style="width:68px" class="r"></div><div style="width:69px" class="r"></div><div style="width:153px"></div><div style="width:140px">4300 - Uniform Co...</div><div style="width:101px"></div><div style="width:138px">Clothing</div></div>
<div class="gr ev" style="top:365px"><div style="width:49px"><i></i></div><div style="width:76px">30</div><div style="width:166px">Ear buds w/charging c...</div><div style="width:62px" class="r">5</div><div style="width:68px" class="r">34.50</div><div style="width:69px" class="r">32.50</div><div style="width:68px" class="r">30.98</div><div style="width:69px" class="r">27.53</div><div style="width:153px">Afterschool</div><div style="width:140px">4005 - Books</div><div style="width:101px">Merchandise...</div><div style="width:138px">School Supplies</div></div>
<div class="gr od" style="top:391px"><div style="width:49px"><i></i></div><div style="width:76px">29</div><div style="width:166px">White Headphones</div><div style="width:62px" class="r">28</div><div style="width:68px" class="r">18.95</div><div style="width:69px" class="r">16.50</div><div style="width:68px" class="r"></div><div style="width:69px" class="r"></div><div style="width:153px;letter-spacing:-0.8px" class="u">BJ WHOLESALE CLUB</div><div style="width:140px">4005 - Books</div><div style="width:101px">Merchandise...</div><div style="width:138px">School Supplies</div></div>
<div class="gr ev" style="top:417px"><div style="width:49px"><i></i></div><div style="width:76px">28</div><div style="width:166px">Black wireless Headph...</div><div style="width:62px" class="r">53</div><div style="width:68px" class="r">20.98</div><div style="width:69px" class="r">18.50</div><div style="width:68px" class="r">12.89</div><div style="width:69px" class="r">11.53</div><div style="width:153px">Afterschool</div><div style="width:140px">1002 - ABCFund</div><div style="width:101px">Merchandise...</div><div style="width:138px">School Supplies</div></div>
<div class="sbu"></div><div class="sbt"></div>
</div>
</div>
</body>
</html>
